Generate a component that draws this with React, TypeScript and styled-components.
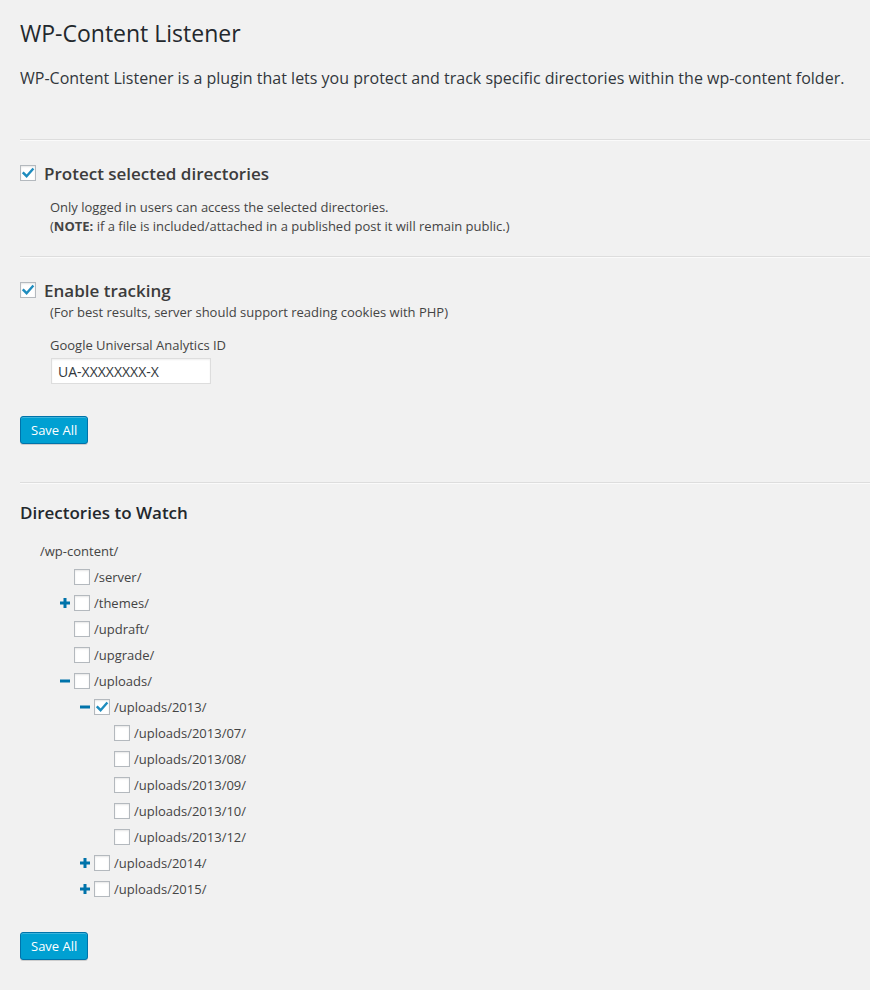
import React from "react";
import styled, { createGlobalStyle } from "styled-components";

const Global = createGlobalStyle`
  html, body { margin: 0; padding: 0; background: #f1f1f1; }
  body { font-family: "Open Sans", "Liberation Sans", sans-serif; color: #444; }
  * { box-sizing: border-box; }
`;

const Wrap = styled.div`
  padding: 0 0 30px 20px;
`;

const Title = styled.h1`
  margin: 18px 0 0;
  font-size: 23px;
  line-height: 30px;
  font-weight: 400;
  color: #23282d;
`;

const Lead = styled.p`
  margin: 19px 0 0;
  font-size: 16px;
  line-height: 22px;
  color: #32373c;
`;

const Rule = styled.hr<{ $mt: number }>`
  margin: ${(p) => p.$mt}px 0 0;
  border: 0;
  border-top: 1px solid #dddddd;
  border-bottom: 1px solid #fafafa;
  height: 0;
`;

const OptionRow = styled.label<{ $mt: number }>`
  display: flex;
  align-items: center;
  gap: 8px;
  height: 24px;
  margin-top: ${(p) => p.$mt}px;
`;

const OptionTitle = styled.span`
  font-size: 17px;
  font-weight: 600;
  color: #3c3c3c;
`;

const Note = styled.div<{ $mt: number }>`
  margin: ${(p) => p.$mt}px 0 0 30px;
  font-size: 13px;
  line-height: 19px;
  color: #444;
  b { font-weight: 700; }
`;

const FieldLabel = styled.div`
  margin: 14px 0 3px 30px;
  font-size: 13px;
  line-height: 19px;
  color: #444;
`;

const TextInput = styled.input`
  display: block;
  margin-left: 31px;
  width: 160px;
  height: 26px;
  padding: 0 6px;
  font-family: "Open Sans", "Liberation Sans", sans-serif;
  font-size: 14px;
  color: #32373c;
  background: #fff;
  border: 1px solid #ddd;
  box-shadow: inset 0 1px 2px rgba(0, 0, 0, 0.07);
  outline: none;
`;

const Button = styled.button<{ $mt: number }>`
  display: block;
  margin-top: ${(p) => p.$mt}px;
  height: 28px;
  padding: 0 10px 1px;
  font-family: "Open Sans", "Liberation Sans", sans-serif;
  font-size: 13px;
  line-height: 26px;
  color: #fff;
  background: #00a0d2;
  border: 1px solid #0073aa;
  border-radius: 3px;
  box-shadow: inset 0 1px 0 rgba(120, 200, 230, 0.5), 0 1px 0 rgba(0, 0, 0, 0.15);
  cursor: pointer;
`;

const SectionTitle = styled.h2`
  margin: 17px 0 0;
  font-size: 17px;
  line-height: 24px;
  font-weight: 600;
  color: #23282d;
`;

const Tree = styled.div`
  margin-top: 13px;
  font-size: 13px;
  color: #444;
`;

const RootRow = styled.div`
  height: 26px;
  line-height: 26px;
  padding-left: 20px;
`;

const TreeRow = styled.div<{ $level: number }>`
  display: flex;
  align-items: center;
  height: 26px;
  padding-left: ${(p) => 40 + (p.$level - 1) * 20}px;
`;

const ToggleSlot = styled.span`
  display: flex;
  align-items: center;
  width: 10px;
  height: 16px;
  margin-right: 4px;
`;

const Box = styled.span`
  display: inline-flex;
  align-items: center;
  justify-content: center;
  flex: none;
  width: 16px;
  height: 16px;
  background: #fff;
  border: 1px solid #b4b9be;
  box-shadow: inset 0 1px 2px rgba(0, 0, 0, 0.1);
`;

const NodeLabel = styled.span`
  margin-left: 4px;
`;

function Check({ checked }: { checked?: boolean }) {
  return (
    <Box>
      {checked && (
        <svg width="14" height="14" viewBox="0 0 14 14">
          <path d="M2.6 7.2 L5.6 10.2 L11.6 3.4" fill="none" stroke="#1e8cbe" strokeWidth="2.4" strokeLinecap="square" />
        </svg>
      )}
    </Box>
  );
}

function Toggle({ kind }: { kind?: "plus" | "minus" }) {
  return (
    <ToggleSlot>
      {kind && (
        <svg width="10" height="10" viewBox="0 0 10 10">
          <rect x="0" y="3.5" width="10" height="3" fill="#0073aa" />
          {kind === "plus" && <rect x="3.5" y="0" width="3" height="10" fill="#0073aa" />}
        </svg>
      )}
    </ToggleSlot>
  );
}

type Node = { level: number; name: string; toggle?: "plus" | "minus"; checked?: boolean };

const nodes: Node[] = [
  { level: 1, name: "/server/" },
  { level: 1, name: "/themes/", toggle: "plus" },
  { level: 1, name: "/updraft/" },
  { level: 1, name: "/upgrade/" },
  { level: 1, name: "/uploads/", toggle: "minus" },
  { level: 2, name: "/uploads/2013/", toggle: "minus", checked: true },
  { level: 3, name: "/uploads/2013/07/" },
  { level: 3, name: "/uploads/2013/08/" },
  { level: 3, name: "/uploads/2013/09/" },
  { level: 3, name: "/uploads/2013/10/" },
  { level: 3, name: "/uploads/2013/12/" },
  { level: 2, name: "/uploads/2014/", toggle: "plus" },
  { level: 2, name: "/uploads/2015/", toggle: "plus" },
];

export default function App() {
  return (
    <>
      <Global />
      <Wrap>
        <Title>WP-Content Listener</Title>
        <Lead>
          WP-Content Listener is a plugin that lets you protect and track specific directories within the wp-content folder.
        </Lead>
        <Rule $mt={50} />
        <OptionRow $mt={20}>
          <Check checked />
          <OptionTitle>Protect selected directories</OptionTitle>
        </OptionRow>
        <Note $mt={13}>
          Only logged in users can access the selected directories.
          <br />
          (<b>NOTE:</b> if a file is included/attached in a published post it will remain public.)
        </Note>
        <Rule $mt={20} />
        <OptionRow $mt={20}>
          <Check checked />
          <OptionTitle>Enable tracking</OptionTitle>
        </OptionRow>
        <Note $mt={1}>(For best results, server should support reading cookies with PHP)</Note>
        <FieldLabel>Google Universal Analytics ID</FieldLabel>
        <TextInput defaultValue="UA-XXXXXXXX-X" />
        <Button $mt={32}>Save All</Button>
        <Rule $mt={38} />
        <SectionTitle>Directories to Watch</SectionTitle>
        <Tree>
          <RootRow>/wp-content/</RootRow>
          {nodes.map((n) => (
            <TreeRow key={n.name} $level={n.level}>
              <Toggle kind={n.toggle} />
              <Check checked={n.checked} />
              <NodeLabel>{n.name}</NodeLabel>
            </TreeRow>
          ))}
        </Tree>
        <Button $mt={30}>Save All</Button>
      </Wrap>
    </>
  );
}
